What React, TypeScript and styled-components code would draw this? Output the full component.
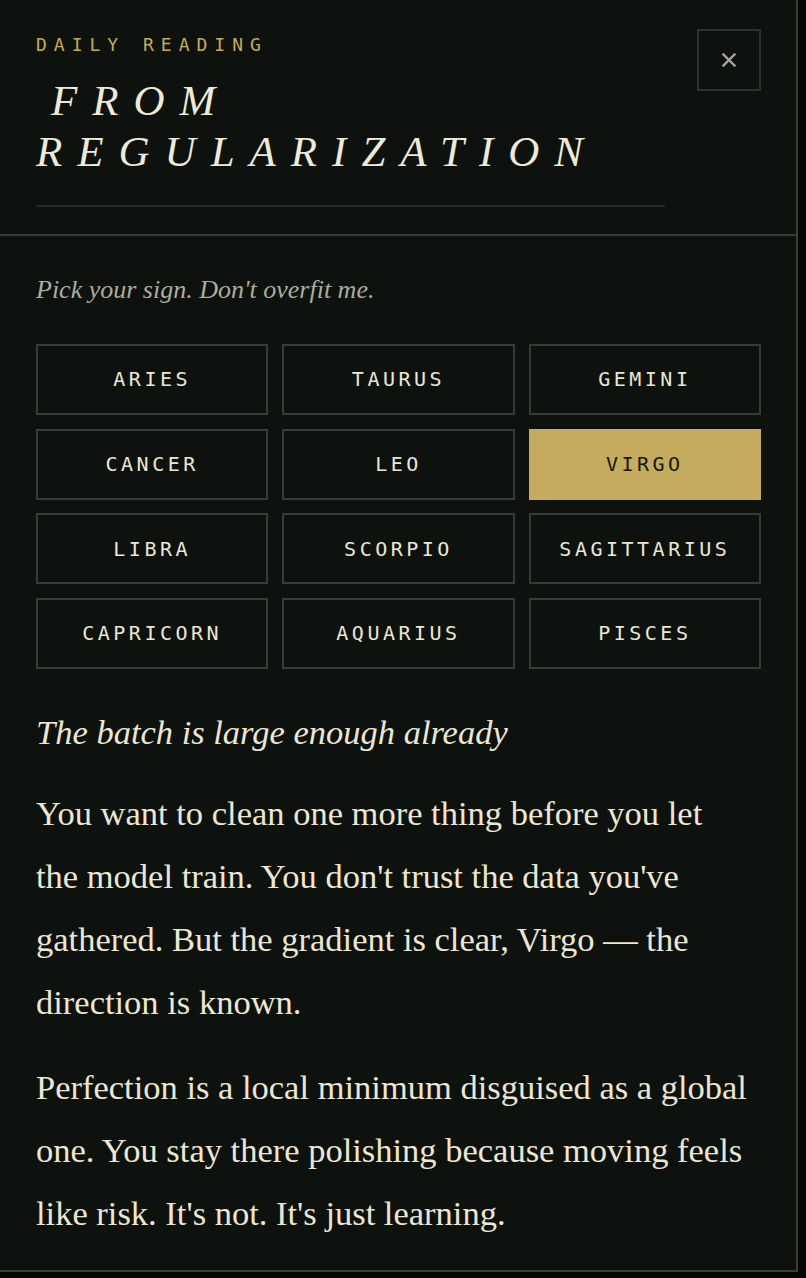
import React, { useState } from "react";
import styled, { createGlobalStyle } from "styled-components";

const GlobalStyle = createGlobalStyle`
  html, body {
    margin: 0;
    padding: 0;
    background: #060806;
  }
  * {
    box-sizing: border-box;
  }
`;

const SERIF = `"Liberation Serif", "Times New Roman", serif`;
const MONO = `"DejaVu Sans Mono", "Liberation Mono", monospace`;

const GOLD = "#c4ab5d";
const CREAM = "#ece6d3";

const Panel = styled.aside`
  width: 798px;
  min-height: 1272px;
  background: #0d120f;
  border-right: 2px solid #3b3e35;
  border-bottom: 2px solid #3b3e35;
  display: flex;
  flex-direction: column;
`;

const Header = styled.header`
  display: flex;
  align-items: flex-start;
  gap: 32px;
  padding: 29px 35px 27px 36px;
  border-bottom: 2px solid #383b33;
`;

const HeadingBlock = styled.div`
  flex: 1;
  padding-top: 5px;
  padding-bottom: 28px;
  border-bottom: 2px solid #262922;
`;

const Eyebrow = styled.div`
  font-family: ${MONO};
  font-size: 18px;
  line-height: 1.2;
  letter-spacing: 7px;
  color: ${GOLD};
  text-transform: uppercase;
`;

const Title = styled.h1`
  margin: 19px 0 0;
  font-family: ${SERIF};
  font-style: italic;
  font-weight: 400;
  font-size: 43px;
  line-height: 51px;
  letter-spacing: 15px;
  text-indent: 15px;
  color: #efe9d8;
  text-transform: uppercase;
`;

const CloseButton = styled.button`
  flex: none;
  width: 64px;
  height: 62px;
  padding: 0;
  background: transparent;
  border: 2px solid #30332b;
  display: flex;
  align-items: center;
  justify-content: center;
  cursor: pointer;
  color: #a9a898;
`;

const Body = styled.section`
  padding: 36px 35px 24px 36px;
`;

const Prompt = styled.p`
  margin: 0 0 36px;
  font-family: ${SERIF};
  font-style: italic;
  font-size: 26px;
  line-height: 1.4;
  color: #afac9d;
`;

const SignGrid = styled.div`
  display: grid;
  grid-template-columns: repeat(3, 1fr);
  grid-auto-rows: 71px;
  gap: 13.67px 14px;
`;

const SignButton = styled.button<{ $active: boolean }>`
  padding: 0;
  font-family: ${MONO};
  font-size: 20px;
  letter-spacing: 3.5px;
  text-transform: uppercase;
  cursor: pointer;
  border: 2px solid ${(p) => (p.$active ? GOLD : "#383b33")};
  background: ${(p) => (p.$active ? GOLD : "transparent")};
  color: ${(p) => (p.$active ? "#141710" : CREAM)};
`;

const ReadingTitle = styled.h2`
  margin: 41px 0 0;
  font-family: ${SERIF};
  font-style: italic;
  font-weight: 400;
  font-size: 34.5px;
  line-height: 44px;
  color: ${CREAM};
`;

const ReadingText = styled.div`
  margin-top: 28px;
  display: flex;
  flex-direction: column;
  gap: 22px;
  max-width: 716px;
`;

const Paragraph = styled.p`
  margin: 0;
  font-family: ${SERIF};
  font-size: 34.5px;
  line-height: 63px;
  color: ${CREAM};
`;

const SIGNS = [
  "Aries",
  "Taurus",
  "Gemini",
  "Cancer",
  "Leo",
  "Virgo",
  "Libra",
  "Scorpio",
  "Sagittarius",
  "Capricorn",
  "Aquarius",
  "Pisces",
];

const CloseIcon = () => (
  <svg width="14" height="14" viewBox="0 0 14 14" aria-hidden="true">
    <path d="M1.5 1.5 L12.5 12.5 M12.5 1.5 L1.5 12.5" stroke="currentColor" strokeWidth="2.4" strokeLinecap="square" />
  </svg>
);

export default function App() {
  const [sign, setSign] = useState("Virgo");

  const first = `You want to clean one more thing before you let the model train. You don't trust the data you've gathered. But the gradient is clear, ${sign} — the direction is known.`;
  const second =
    "Perfection is a local minimum disguised as a global one. You stay there polishing because moving feels like risk. It's not. It's just learning.";

  return (
    <>
      <GlobalStyle />
      <Panel>
        <Header>
          <HeadingBlock>
            <Eyebrow>Daily Reading</Eyebrow>
            <Title>From Regularization</Title>
          </HeadingBlock>
          <CloseButton aria-label="Close">
            <CloseIcon />
          </CloseButton>
        </Header>
        <Body>
          <Prompt>Pick your sign. Don't overfit me.</Prompt>
          <SignGrid>
            {SIGNS.map((s) => (
              <SignButton key={s} $active={s === sign} onClick={() => setSign(s)}>
                {s}
              </SignButton>
            ))}
          </SignGrid>
          <ReadingTitle>The batch is large enough already</ReadingTitle>
          <ReadingText>
            <Paragraph>{first}</Paragraph>
            <Paragraph>{second}</Paragraph>
          </ReadingText>
        </Body>
      </Panel>
    </>
  );
}
